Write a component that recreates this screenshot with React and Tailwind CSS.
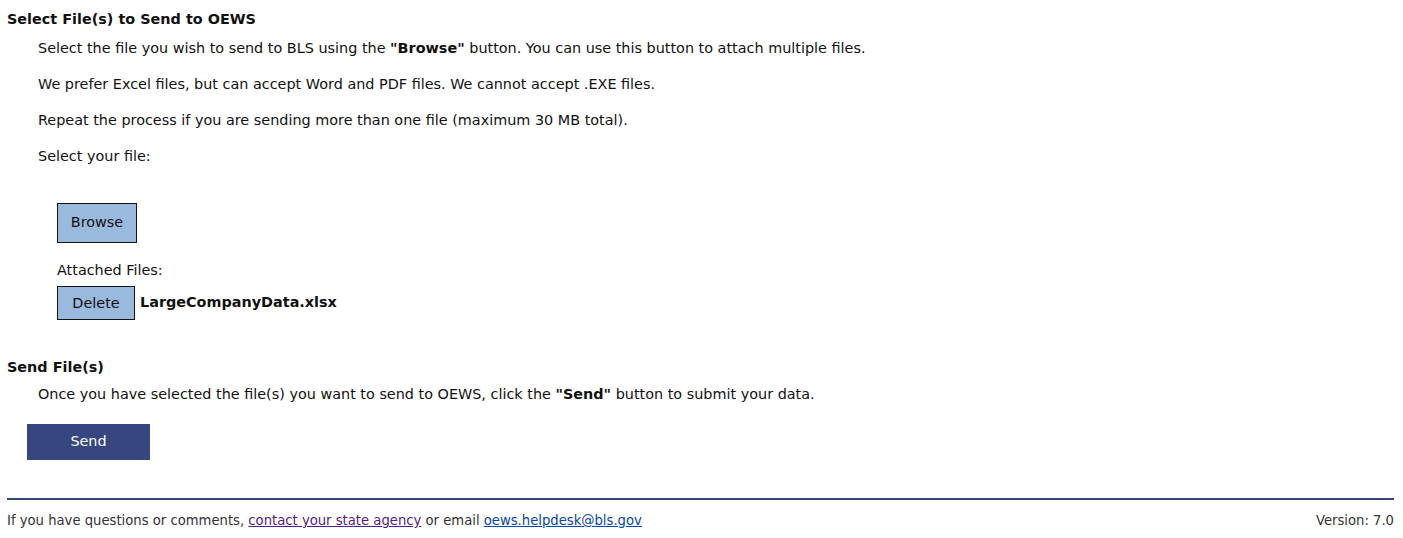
import React from "react";

const font = { fontFamily: '"DejaVu Sans", Verdana, sans-serif' };

export default function App() {
  return (
    <div className="bg-white text-[#000] min-h-[538px] px-[7px] text-[14.4px]" style={font}>
      <h2 className="pt-[10px] text-[14.4px] font-bold leading-[18px] text-[#111]">Select File(s) to Send to OEWS</h2>
      <div className="pl-[31px] text-[#111]">
        <p className="mt-[11px] leading-[18px]">
          Select the file you wish to send to BLS using the <b>"Browse"</b> button. You can use this button to attach multiple files.
        </p>
        <p className="mt-[18px] leading-[18px]">We prefer Excel files, but can accept Word and PDF files. We cannot accept .EXE files.</p>
        <p className="mt-[18px] leading-[18px]">Repeat the process if you are sending more than one file (maximum 30 MB total).</p>
        <p className="mt-[18px] leading-[18px]">Select your file:</p>
        <div className="pl-[19px]">
          <button className="mt-[38px] w-[80px] h-[40px] bg-[#99b9dd] border border-[#111] text-[#111]">Browse</button>
          <p className="mt-[18px] leading-[18px]">Attached Files:</p>
          <div className="mt-[7px] flex items-center gap-[5px]">
            <button className="w-[78px] h-[34px] bg-[#99b9dd] border border-[#111] text-[#111] pt-[2px]">Delete</button>
            <span className="font-bold">LargeCompanyData.xlsx</span>
          </div>
        </div>
      </div>
      <h2 className="mt-[38px] text-[14.4px] font-bold leading-[18px] text-[#111]">Send File(s)</h2>
      <div className="pl-[31px]">
        <p className="mt-[9px] leading-[18px] text-[#111]">
          Once you have selected the file(s) you want to send to OEWS, click the <b>"Send"</b> button to submit your data.
        </p>
      </div>
      <button className="ml-[20px] mt-[21px] w-[123px] h-[36px] bg-[#36467f] text-white">Send</button>
      <hr className="mt-[38px] border-0 h-[2px] bg-[#36467f] w-[1387px]" />
      <div className="flex justify-between w-[1387px] mt-[13px] text-[13.2px] text-[#333] leading-[16px]">
        <span>
          If you have questions or comments,{" "}
          <a href="#" className="underline text-[#551a8b]">contact your state agency</a> or email{" "}
          <a href="#" className="underline text-[#0645ad]">oews.helpdesk@bls.gov</a>
        </span>
        <span>Version: 7.0</span>
      </div>
    </div>
  );
}
